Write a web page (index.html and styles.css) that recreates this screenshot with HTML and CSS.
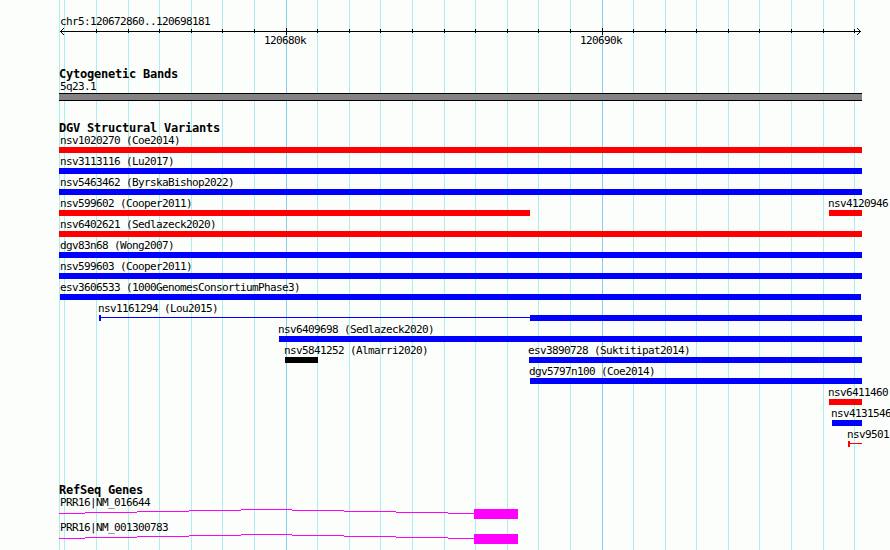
FILE: index.html
```html
<!DOCTYPE html>
<html lang="en">
<head>
    <meta charset="UTF-8">
    <title>chr5:120672860..120698181</title>
    <link rel="stylesheet" href="styles.css">
</head>
<body>
    <div class="browser">
        <svg class="gridlines" width="890" height="550" shape-rendering="crispEdges">
            <path class="minor" d="M59.5 0V550M64.5 0V550M96.5 0V550M128.5 0V550M159.5 0V550M191.5 0V550M222.5 0V550M254.5 0V550M317.5 0V550M349.5 0V550M380.5 0V550M412.5 0V550M444.5 0V550M475.5 0V550M507.5 0V550M538.5 0V550M570.5 0V550M633.5 0V550M665.5 0V550M696.5 0V550M728.5 0V550M759.5 0V550M791.5 0V550M823.5 0V550M854.5 0V550"/>
            <path class="major" d="M286.5 0V550M602.5 0V550"/>
        </svg>

        <div class="panel">
            <div class="ruler">
                <div class="label">chr5:120672860..120698181</div>
                <svg class="scale" width="803" height="7" viewBox="59 28 803 7" shape-rendering="crispEdges">
                    <path d="M60 31.5H861M96.5 29V33M128.5 29V33M159.5 29V33M191.5 29V33M222.5 29V33M254.5 29V33M317.5 29V33M349.5 29V33M380.5 29V33M412.5 29V33M444.5 29V33M475.5 29V33M507.5 29V33M538.5 29V33M570.5 29V33M633.5 29V33M665.5 29V33M696.5 29V33M728.5 29V33M759.5 29V33M791.5 29V33M823.5 29V33M854.5 29V33M286.5 28V35M602.5 28V35"/>
                    <!-- arrow heads -->
                    <path d="M61 30.5H62M62 29.5H63M63 28.5H64M61 32.5H62M62 33.5H63M63 34.5H64M859 30.5H860M858 29.5H859M857 28.5H858M859 32.5H860M858 33.5H859M857 34.5H858"/>
                </svg>
                <div class="ticks">
                    <span>120680k</span>
                    <span>120690k</span>
                </div>
            </div>

            <div class="track cytoband">
                <h2>Cytogenetic Bands</h2>
                <div class="label">5q23.1</div>
                <div class="band"></div>
            </div>

            <div class="track variants">
                <h2>DGV Structural Variants</h2>
                <div class="row"><div class="feature edge" style="width: 803px"><div class="label">nsv1020270 (Coe2014)</div><div class="bar red"></div></div></div>
                <div class="row"><div class="feature edge" style="width: 803px"><div class="label">nsv3113116 (Lu2017)</div><div class="bar blue"></div></div></div>
                <div class="row"><div class="feature edge" style="width: 803px"><div class="label">nsv5463462 (ByrskaBishop2022)</div><div class="bar blue"></div></div></div>
                <div class="row">
                    <div class="feature edge" style="width: 471px"><div class="label">nsv599602 (Cooper2011)</div><div class="bar red"></div></div>
                    <div class="feature" style="margin-left: 299px; width: 33px"><div class="label">nsv4120946</div><div class="bar red"></div></div>
                </div>
                <div class="row"><div class="feature edge" style="width: 803px"><div class="label">nsv6402621 (Sedlazeck2020)</div><div class="bar red"></div></div></div>
                <div class="row"><div class="feature edge" style="width: 803px"><div class="label">dgv83n68 (Wong2007)</div><div class="bar blue"></div></div></div>
                <div class="row"><div class="feature edge" style="width: 803px"><div class="label">nsv599603 (Cooper2011)</div><div class="bar blue"></div></div></div>
                <div class="row"><div class="feature inset" style="margin-left: 1px; width: 801px"><div class="label">esv3606533 (1000GenomesConsortiumPhase3)</div><div class="bar blue"></div></div></div>
                <div class="row">
                    <div class="feature" style="margin-left: 40px; width: 763px">
                        <div class="label">nsv1161294 (Lou2015)</div>
                        <div class="segments blue"><i class="cap"></i><i class="line"></i><i class="block" style="width: 332px"></i></div>
                    </div>
                </div>
                <div class="row"><div class="feature" style="margin-left: 220px; width: 583px"><div class="label">nsv6409698 (Sedlazeck2020)</div><div class="bar blue"></div></div></div>
                <div class="row">
                    <div class="feature" style="margin-left: 226px; width: 33px"><div class="label">nsv5841252 (Almarri2020)</div><div class="bar black"></div></div>
                    <div class="feature" style="margin-left: 211px; width: 333px"><div class="label">esv3890728 (Suktitipat2014)</div><div class="bar blue"></div></div>
                </div>
                <div class="row"><div class="feature" style="margin-left: 471px; width: 332px"><div class="label">dgv5797n100 (Coe2014)</div><div class="bar blue"></div></div></div>
                <div class="row"><div class="feature" style="margin-left: 770px; width: 33px"><div class="label">nsv6411460</div><div class="bar red"></div></div></div>
                <div class="row"><div class="feature" style="margin-left: 773px; width: 30px"><div class="label">nsv4131546</div><div class="bar blue"></div></div></div>
                <div class="row">
                    <div class="feature" style="margin-left: 789px; width: 14px">
                        <div class="label">nsv9501</div>
                        <div class="segments red"><i class="cap"></i><i class="line"></i></div>
                    </div>
                </div>
            </div>

            <div class="track genes">
                <h2>RefSeq Genes</h2>
                <div class="gene">
                    <div class="label">PRR16|NM_016644</div>
                    <svg width="803" height="10" shape-rendering="crispEdges">
                        <path d="M0 4.5H26M26 3.5H78M78 2.5H130M130 1.5H182M182 .5H233M233 1.5H285M285 2.5H337M337 3.5H389M389 4.5H415"/>
                        <rect x="415" y="0" width="44" height="10"/>
                    </svg>
                </div>
                <div class="gene">
                    <div class="label">PRR16|NM_001300783</div>
                    <svg width="803" height="10" shape-rendering="crispEdges">
                        <path d="M0 4.5H26M26 3.5H78M78 2.5H130M130 1.5H182M182 .5H233M233 1.5H285M285 2.5H337M337 3.5H389M389 4.5H415"/>
                        <rect x="415" y="0" width="44" height="10"/>
                    </svg>
                </div>
            </div>
        </div>
    </div>
</body>
</html>
```
FILE: styles.css
```css
body {
    margin: 0;
    background-color: #fcfefc;
    color: #000;
    font-family: "DejaVu Sans Mono", "Liberation Mono", monospace;
    font-size: 11px;
    line-height: 13px;
    letter-spacing: -0.622px;
}

.browser {
    position: relative;
    width: 890px;
    height: 550px;
    overflow: hidden;
}

svg {
    display: block;
}

/* lines run behind every track */
.gridlines {
    position: absolute;
    top: 0;
    left: 0;
}

.gridlines .minor {
    stroke: #afeeee;
}

.gridlines .major {
    stroke: #87ceeb;
}

.panel {
    position: relative;
    width: 803px;
    margin-left: 59px;
    padding-top: 15px;
}

.label {
    height: 13px;
    padding-left: 1px;
    white-space: nowrap;
}

.scale {
    stroke: #000;
}

.ticks {
    display: flex;
    gap: 274px;
    height: 13px;
    margin-top: -1px;
    padding-left: 205px;
}

.ticks span {
    width: 42px;
}

h2 {
    height: 13px;
    margin: 0;
    font-size: 12px;
    font-weight: bold;
    line-height: 14px;
    letter-spacing: -0.224px;
}

.cytoband {
    margin-top: 20px;
}

.band {
    height: 6px;
    border-top: 1px solid #000;
    border-bottom: 1px solid #000;
    background-color: #848284;
}

.variants {
    margin-top: 20px;
}

.row {
    display: flex;
    height: 21px;
}

.feature {
    flex: none;
}

.feature .label {
    margin-left: -1px;
    padding-left: 0;
}

.feature.edge .label {
    margin-left: 1px;
}

.feature.inset .label {
    margin-left: 0;
}

.bar {
    height: 6px;
    background-color: currentColor;
}

.bar.red,
.segments.red {
    color: #f00;
}

.bar.blue,
.segments.blue {
    color: #00f;
}

.segments {
    display: flex;
    height: 6px;
}

.cap,
.block {
    background-color: currentColor;
}

.cap {
    width: 2px;
}

.line {
    flex: 1;
    height: 1px;
    margin-top: 2px;
    background-color: currentColor;
}

.genes {
    margin-top: 34px;
}

.gene {
    height: 25px;
}

.gene svg {
    stroke: #f0f;
    fill: #f0f;
}

.gene rect {
    stroke: none;
}
```
